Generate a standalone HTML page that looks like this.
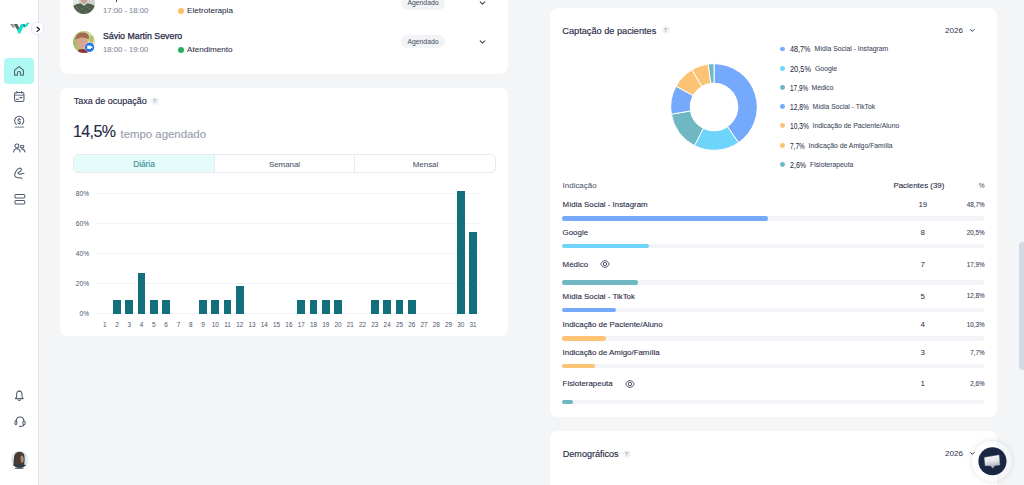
<!DOCTYPE html>
<html><head><meta charset="utf-8">
<style>
*{margin:0;padding:0;box-sizing:border-box}
html,body{width:1024px;height:485px;overflow:hidden;background:#f4f5f7;font-family:"Liberation Sans",sans-serif;color:#1f2a44}
#side{position:absolute;left:0;top:0;width:39px;height:485px;background:#fff;border-right:1px solid #e0e3ea}
.card{position:absolute;background:#fff;border-radius:8px}
.t{position:absolute;white-space:nowrap;line-height:1}
svg{position:absolute;overflow:visible}
.q{position:absolute;width:8px;height:8px;border-radius:50%;background:#f1f3f6;color:#9aa3b2;font-size:5px;line-height:8px;text-align:center;font-weight:700}
</style></head><body>

<div id="side"></div>
<svg style="left:0;top:0" width="40" height="40" viewBox="0 0 40 40">
<path d="M10 24 L13 24 L15.2 27.6 L12.6 27.6 Z" fill="#8e9394"/>
<path d="M13.8 24 L17.4 24 L19.6 28.8 L18.2 31.6 Z" fill="#5c6264"/>
<path d="M16.9 29.4 L18.4 33.5 L20.1 33.5 L24.6 24 L20.9 24 L18.5 29 Z" fill="#14e0cf"/>
<path d="M23.4 24.4 L25.3 24.4 L24.9 26.6 L23.5 26.9 Z" fill="#3d4446"/>
<path d="M23.4 27.6 L25.8 27.6 L29.3 23.2 L28.4 22.4 L26.8 22.9 Z" fill="#14e0cf"/>
</svg>
<div style="position:absolute;left:31px;top:22px;width:13px;height:13px;border-radius:5px;background:#fff;border:1px solid #e7e9f0"></div>
<svg style="left:35px;top:25px" width="6" height="7" viewBox="0 0 6 7"><path d="M2.1 2.2 L4.5 4.3 L2.1 6.4" fill="none" stroke="#1c2230" stroke-width="1.25" stroke-linecap="round" stroke-linejoin="round"/></svg>
<div style="position:absolute;left:4px;top:58px;width:30px;height:26px;border-radius:4px;background:#aef9f1"></div>
<svg style="left:14px;top:65.5px" width="11" height="11" viewBox="0 0 11 11"><path d="M0.6 4.2 L5 0.6 L9.4 4.2 L9.4 8.7 Q9.4 9.2 8.9 9.2 L6.6 9.2 L6.6 7 Q6.6 5.5 5 5.5 Q3.4 5.5 3.4 7 L3.4 9.2 L1.1 9.2 Q0.6 9.2 0.6 8.7 Z" fill="none" stroke="#505b73" stroke-width="1.05" stroke-linecap="round" stroke-linejoin="round" stroke="#3c5a62"/></svg>
<svg style="left:14px;top:91px" width="11" height="11" viewBox="0 0 11 11"><rect x="0.55" y="1.5" width="9.4" height="8.9" rx="1.5" fill="none" stroke="#505b73" stroke-width="1.05" stroke-linecap="round" stroke-linejoin="round"/><path d="M0.6 4.2 L9.9 4.2" fill="none" stroke="#505b73" stroke-width="1.6" stroke-opacity="0.55"/><path d="M2.8 0.4 L2.8 2 M7.6 0.4 L7.6 2 M2.4 8.2 L4.6 8.2 M5.8 6.6 L8 6.6" fill="none" stroke="#505b73" stroke-width="1.05" stroke-linecap="round" stroke-linejoin="round"/></svg>
<svg style="left:13px;top:115px" width="13" height="14" viewBox="0 0 13 14"><path d="M3.24 9.32 A4.6 4.6 0 1 1 9.16 9.32" fill="none" stroke="#505b73" stroke-width="1.05" stroke-linecap="round" stroke-linejoin="round"/><path d="M7.5 4.7 Q7.1 4 6.2 4 Q4.9 4 4.9 5.1 Q4.9 6 6.2 6.3 Q7.5 6.6 7.5 7.6 Q7.5 8.6 6.2 8.6 Q5.1 8.6 4.8 7.9 M6.2 3.3 L6.2 4 M6.2 8.6 L6.2 9.3" fill="none" stroke="#505b73" stroke-width="1.05" stroke-linecap="round" stroke-linejoin="round"/><path d="M2.2 12.1 L10.6 12.1" fill="none" stroke="#8f97a6" stroke-width="1.3" stroke-linecap="round"/></svg>
<svg style="left:13px;top:143px" width="13" height="10" viewBox="0 0 13 10"><rect x="2" y="0.9" width="3.8" height="3.8" rx="1.7" fill="none" stroke="#505b73" stroke-width="1.05" stroke-linecap="round" stroke-linejoin="round"/><path d="M0.6 9 Q0.9 5.8 3.9 5.8 Q6.9 5.8 7.2 9" fill="none" stroke="#505b73" stroke-width="1.05" stroke-linecap="round" stroke-linejoin="round"/><ellipse cx="9.1" cy="3.5" rx="1.8" ry="1.35" fill="none" stroke="#505b73" stroke-width="1.05" stroke-linecap="round" stroke-linejoin="round"/><path d="M8.6 6 Q11.6 6 11.9 9" fill="none" stroke="#505b73" stroke-width="1.05" stroke-linecap="round" stroke-linejoin="round"/></svg>
<svg style="left:13px;top:167px" width="12" height="13" viewBox="0 0 12 13"><path d="M6.6 1.1 Q4.2 1.8 2.5 5.2 Q0.9 8.6 2.7 10 Q4.4 10.9 8.4 10.9 L8.8 11.7 M6.6 1.1 Q8.7 1.2 8.3 3 Q7.8 4.6 5.3 5.4 L5 6.3 Q6.6 7.6 8.2 6.9 Q9.6 6.3 11 6.3" fill="none" stroke="#505b73" stroke-width="1.05" stroke-linecap="round" stroke-linejoin="round"/></svg>
<svg style="left:13.5px;top:193px" width="12" height="12" viewBox="0 0 12 12"><rect x="0.9" y="1.4" width="9.9" height="3.6" rx="1.2" fill="none" stroke="#505b73" stroke-width="1.05" stroke-linecap="round" stroke-linejoin="round"/><rect x="0.9" y="7.4" width="9.9" height="3.6" rx="1.2" fill="none" stroke="#505b73" stroke-width="1.05" stroke-linecap="round" stroke-linejoin="round"/></svg>
<svg style="left:14px;top:390px" width="11" height="12" viewBox="0 0 11 12"><path d="M1.4 8.6 Q2.6 7.8 2.6 6 L2.6 4.6 Q2.6 1.1 5.3 1.1 Q8 1.1 8 4.6 L8 6 Q8 7.8 9.2 8.6 Z M4.2 10 Q5.3 11.2 6.4 10 M5.3 0.5 L5.3 1.1" fill="none" stroke="#505b73" stroke-width="1.05" stroke-linecap="round" stroke-linejoin="round"/></svg>
<svg style="left:13.5px;top:416px" width="12" height="12" viewBox="0 0 12 12"><path d="M2.2 5.6 Q2.2 0.9 6 0.9 Q9.8 0.9 9.8 5.6" fill="none" stroke="#505b73" stroke-width="1.05" stroke-linecap="round" stroke-linejoin="round"/><ellipse cx="1.9" cy="6.7" rx="1" ry="1.9" fill="none" stroke="#505b73" stroke-width="1.05" stroke-linecap="round" stroke-linejoin="round"/><ellipse cx="10" cy="6.7" rx="1.2" ry="2" fill="none" stroke="#505b73" stroke-width="1.05" stroke-linecap="round" stroke-linejoin="round"/><path d="M9.8 8.8 Q9.4 10.3 6.6 10.4" fill="none" stroke="#505b73" stroke-width="1.05" stroke-linecap="round" stroke-linejoin="round"/><circle cx="6" cy="10.4" r="0.8" fill="#505b73"/></svg>
<svg style="left:0;top:440px" width="38" height="40" viewBox="0 440 38 40">
<defs><clipPath id="ua"><circle cx="19.6" cy="459.4" r="8.6"/></clipPath></defs>
<g clip-path="url(#ua)">
<rect x="10" y="450" width="20" height="20" fill="#d9edf2"/>
<path d="M13.6 466 Q13.4 460 14.2 456 Q15.6 451.6 20 451.8 Q24.4 452.2 24.6 457 Q25 462 23.8 466 Z" fill="#4a3a33"/>
<path d="M21 455.5 Q23.6 455.8 23.8 459 Q23.8 462.4 21.6 463 Q20.4 461 20.6 458 Z" fill="#a98e80"/>
<path d="M10 469 L11.5 465 Q16 464.2 19.6 464.8 Q24 464.2 27.6 465 L30 469 Z" fill="#2c3d47"/>
</g>
<path d="M15.2 468.4 L23 468.4" stroke="#4a4f57" stroke-width="0.9" stroke-linecap="round"/>
</svg>
<div class="card" style="left:60px;top:-20px;width:448px;height:94px"></div>
<div class="card" style="left:60px;top:88px;width:448px;height:248px"></div>
<div class="card" style="left:550px;top:8px;width:447px;height:408.5px"></div>
<div class="card" style="left:550px;top:431px;width:447px;height:80px"></div>
<svg style="left:73px;top:-7.6px" width="22" height="22" viewBox="0 0 22 22">
<defs><clipPath id="a1"><circle cx="11" cy="11" r="11"/></clipPath></defs>
<g clip-path="url(#a1)"><rect width="22" height="22" fill="#cfd3d0"/>
<rect x="0" y="0" width="6" height="22" fill="#e3e6e4"/>
<path d="M7 4 Q11 0 15 4 Q15.5 10 11 12 Q6.5 10 7 4Z" fill="#c79f8b"/>
<path d="M0 22 L0 14 Q4 11 8 11.5 L11 14 L14 11.5 Q18 11 22 14 L22 22Z" fill="#505f4e"/>
<path d="M3 15 L5 17 M8 16 L10 18 M14 15 L16 17 M18 17 L20 19 M5 19 L7 21 M12 19 L14 21" stroke="#7b8a77" stroke-width="0.8"/>
</g></svg>
<div class="t" style="top:7.17px;font-size:7.7px;color:#848d9e;-webkit-text-stroke:0.1px #848d9e;left:103.00px;">17:00 - 18:00</div>
<div style="position:absolute;left:178px;top:7.8px;width:6px;height:6px;border-radius:50%;background:#fdbf6a"></div>
<div class="t" style="top:7.40px;font-size:8.1px;color:#1f2a44;-webkit-text-stroke:0.05px #1f2a44;left:187.00px;">Eletroterapia</div>
<div style="position:absolute;left:116.2px;top:0;width:1px;height:1.6px;background:#3a4459"></div>
<svg style="left:73px;top:31px" width="22" height="22" viewBox="0 0 22 22">
<defs><clipPath id="a2"><circle cx="11" cy="11" r="11"/></clipPath>
<linearGradient id="bg2" x1="0" y1="0" x2="1" y2="0"><stop offset="0" stop-color="#a3b464"/><stop offset="0.6" stop-color="#c9cf92"/><stop offset="1" stop-color="#e6e8c8"/></linearGradient></defs>
<g clip-path="url(#a2)"><rect width="22" height="22" fill="url(#bg2)"/>
<ellipse cx="18.5" cy="8.5" rx="2.2" ry="4" fill="#b4c06c"/>
<ellipse cx="9.4" cy="11.2" rx="5.4" ry="6.4" fill="#d8a68e"/>
<path d="M2.6 8.6 Q2.8 2.6 8.6 1.6 Q14.2 1 16 5.2 L15.6 8.4 Q10.5 5 4.6 7.8 Z" fill="#a06b4e"/>
<path d="M4.5 22 L5.6 18.6 Q10 17.6 14.4 18.6 L15.4 22 Z" fill="#8d3344"/></g>
<circle cx="16.6" cy="16.3" r="5" fill="#fff" opacity="0.6"/>
<circle cx="16.6" cy="16.3" r="4.6" fill="#1f73ee"/>
<path d="M14.2 15 Q14.2 14.4 14.8 14.4 L17.4 14.4 Q18 14.4 18 15 L18 17.4 Q18 18 17.4 18 L14.8 18 Q14.2 18 14.2 17.4Z M18 15.7 L19.4 14.9 L19.4 17.5 L18 16.7Z" fill="#fff"/>
</svg>
<div class="t" style="top:31.90px;font-size:8.8px;color:#1f2a44;-webkit-text-stroke:0.25px #1f2a44;left:103.00px;">Sávio Martin Severo</div>
<div class="t" style="top:46.17px;font-size:7.7px;color:#848d9e;-webkit-text-stroke:0.1px #848d9e;left:103.00px;">18:00 - 19:00</div>
<div style="position:absolute;left:178px;top:46.8px;width:6px;height:6px;border-radius:50%;background:#22b35a"></div>
<div class="t" style="top:46.40px;font-size:8.1px;color:#1f2a44;-webkit-text-stroke:0.05px #1f2a44;left:187.00px;">Atendimento</div>
<div style="position:absolute;left:401px;top:-4.4px;width:44px;height:13.9px;border-radius:7px;background:#f1f3f6"></div>
<div class="t" style="top:0.44px;font-size:6.8px;color:#4b556a;-webkit-text-stroke:0.06px #4b556a;left:223.00px;width:400px;text-align:center;">Agendado</div>
<svg style="left:479px;top:1.0px" width="7" height="4" viewBox="0 0 7 4"><path d="M1.2 0.9 L3.5 3.1 L5.8 0.9" fill="none" stroke="#3a4256" stroke-width="1.05" stroke-linecap="round" stroke-linejoin="round"/></svg>
<div style="position:absolute;left:401px;top:34.6px;width:44px;height:13.9px;border-radius:7px;background:#f1f3f6"></div>
<div class="t" style="top:38.74px;font-size:6.8px;color:#4b556a;-webkit-text-stroke:0.06px #4b556a;left:223.00px;width:400px;text-align:center;">Agendado</div>
<svg style="left:479px;top:39.5px" width="7" height="4" viewBox="0 0 7 4"><path d="M1.2 0.9 L3.5 3.1 L5.8 0.9" fill="none" stroke="#3a4256" stroke-width="1.05" stroke-linecap="round" stroke-linejoin="round"/></svg>
<div class="t" style="top:96.72px;font-size:9.0px;color:#1f2a44;-webkit-text-stroke:0.14px #1f2a44;left:73.70px;">Taxa de ocupação</div>
<div class="q" style="left:150.5px;top:96.8px">?</div>
<div class="t" style="top:123.98px;font-size:16px;color:#1f2a44;-webkit-text-stroke:0.15px #1f2a44;letter-spacing:-0.6px;left:73.00px;">14,5%</div>
<div class="t" style="top:128.71px;font-size:11.4px;color:#98a0ae;-webkit-text-stroke:0.15px #98a0ae;left:120.50px;">tempo agendado</div>
<div style="position:absolute;left:73px;top:154px;width:423px;height:19px;border:1px solid #e6e9ef;border-radius:5px;overflow:hidden"><div style="position:absolute;left:0;top:0;width:139.6px;height:17px;background:#e4fcfa"></div><div style="position:absolute;left:139.6px;top:0;width:1px;height:17px;background:#e6e9ef"></div><div style="position:absolute;left:280.4px;top:0;width:1px;height:17px;background:#e6e9ef"></div></div>
<div class="t" style="top:160.31px;font-size:8.3px;color:#3e8f98;-webkit-text-stroke:0.15px #3e8f98;left:-56.00px;width:400px;text-align:center;">Diária</div>
<div class="t" style="top:160.58px;font-size:7.9px;color:#4b556a;-webkit-text-stroke:0.08px #4b556a;left:84.50px;width:400px;text-align:center;">Semanal</div>
<div class="t" style="top:160.58px;font-size:7.9px;color:#4b556a;-webkit-text-stroke:0.08px #4b556a;left:225.50px;width:400px;text-align:center;">Mensal</div>
<div style="position:absolute;left:96px;top:313.20px;width:385px;height:1px;background:#f2f4f7"></div>
<div class="t" style="top:310.93px;font-size:6.6px;color:#4b556a;font-weight:400;right:935.00px;">0%</div>
<div style="position:absolute;left:96px;top:283.25px;width:385px;height:1px;background:#f2f4f7"></div>
<div class="t" style="top:280.98px;font-size:6.6px;color:#4b556a;font-weight:400;right:935.00px;">20%</div>
<div style="position:absolute;left:96px;top:253.30px;width:385px;height:1px;background:#f2f4f7"></div>
<div class="t" style="top:251.03px;font-size:6.6px;color:#4b556a;font-weight:400;right:935.00px;">40%</div>
<div style="position:absolute;left:96px;top:223.35px;width:385px;height:1px;background:#f2f4f7"></div>
<div class="t" style="top:221.08px;font-size:6.6px;color:#4b556a;font-weight:400;right:935.00px;">60%</div>
<div style="position:absolute;left:96px;top:193.40px;width:385px;height:1px;background:#f2f4f7"></div>
<div class="t" style="top:191.13px;font-size:6.6px;color:#4b556a;font-weight:400;right:935.00px;">80%</div>
<div class="t" style="top:321.81px;font-size:6.4px;color:#4b556a;font-weight:400;left:-95.28px;width:400px;text-align:center;">1</div>
<div style="position:absolute;left:113.15px;top:300.09px;width:7.7px;height:13.61px;background:#126f7b"></div>
<div class="t" style="top:321.81px;font-size:6.4px;color:#4b556a;font-weight:400;left:-83.00px;width:400px;text-align:center;">2</div>
<div style="position:absolute;left:125.43px;top:300.09px;width:7.7px;height:13.61px;background:#126f7b"></div>
<div class="t" style="top:321.81px;font-size:6.4px;color:#4b556a;font-weight:400;left:-70.72px;width:400px;text-align:center;">3</div>
<div style="position:absolute;left:137.71px;top:272.86px;width:7.7px;height:40.84px;background:#126f7b"></div>
<div class="t" style="top:321.81px;font-size:6.4px;color:#4b556a;font-weight:400;left:-58.44px;width:400px;text-align:center;">4</div>
<div style="position:absolute;left:149.99px;top:300.09px;width:7.7px;height:13.61px;background:#126f7b"></div>
<div class="t" style="top:321.81px;font-size:6.4px;color:#4b556a;font-weight:400;left:-46.16px;width:400px;text-align:center;">5</div>
<div style="position:absolute;left:162.27px;top:300.09px;width:7.7px;height:13.61px;background:#126f7b"></div>
<div class="t" style="top:321.81px;font-size:6.4px;color:#4b556a;font-weight:400;left:-33.88px;width:400px;text-align:center;">6</div>
<div class="t" style="top:321.81px;font-size:6.4px;color:#4b556a;font-weight:400;left:-21.60px;width:400px;text-align:center;">7</div>
<div class="t" style="top:321.81px;font-size:6.4px;color:#4b556a;font-weight:400;left:-9.32px;width:400px;text-align:center;">8</div>
<div style="position:absolute;left:199.11px;top:300.09px;width:7.7px;height:13.61px;background:#126f7b"></div>
<div class="t" style="top:321.81px;font-size:6.4px;color:#4b556a;font-weight:400;left:2.96px;width:400px;text-align:center;">9</div>
<div style="position:absolute;left:211.39px;top:300.09px;width:7.7px;height:13.61px;background:#126f7b"></div>
<div class="t" style="top:321.81px;font-size:6.4px;color:#4b556a;font-weight:400;left:15.24px;width:400px;text-align:center;">10</div>
<div style="position:absolute;left:223.67px;top:300.09px;width:7.7px;height:13.61px;background:#126f7b"></div>
<div class="t" style="top:321.81px;font-size:6.4px;color:#4b556a;font-weight:400;left:27.52px;width:400px;text-align:center;">11</div>
<div style="position:absolute;left:235.95px;top:286.47px;width:7.7px;height:27.23px;background:#126f7b"></div>
<div class="t" style="top:321.81px;font-size:6.4px;color:#4b556a;font-weight:400;left:39.80px;width:400px;text-align:center;">12</div>
<div class="t" style="top:321.81px;font-size:6.4px;color:#4b556a;font-weight:400;left:52.08px;width:400px;text-align:center;">13</div>
<div class="t" style="top:321.81px;font-size:6.4px;color:#4b556a;font-weight:400;left:64.36px;width:400px;text-align:center;">14</div>
<div class="t" style="top:321.81px;font-size:6.4px;color:#4b556a;font-weight:400;left:76.64px;width:400px;text-align:center;">15</div>
<div class="t" style="top:321.81px;font-size:6.4px;color:#4b556a;font-weight:400;left:88.92px;width:400px;text-align:center;">16</div>
<div style="position:absolute;left:297.35px;top:300.09px;width:7.7px;height:13.61px;background:#126f7b"></div>
<div class="t" style="top:321.81px;font-size:6.4px;color:#4b556a;font-weight:400;left:101.20px;width:400px;text-align:center;">17</div>
<div style="position:absolute;left:309.63px;top:300.09px;width:7.7px;height:13.61px;background:#126f7b"></div>
<div class="t" style="top:321.81px;font-size:6.4px;color:#4b556a;font-weight:400;left:113.48px;width:400px;text-align:center;">18</div>
<div style="position:absolute;left:321.91px;top:300.09px;width:7.7px;height:13.61px;background:#126f7b"></div>
<div class="t" style="top:321.81px;font-size:6.4px;color:#4b556a;font-weight:400;left:125.76px;width:400px;text-align:center;">19</div>
<div style="position:absolute;left:334.19px;top:300.09px;width:7.7px;height:13.61px;background:#126f7b"></div>
<div class="t" style="top:321.81px;font-size:6.4px;color:#4b556a;font-weight:400;left:138.04px;width:400px;text-align:center;">20</div>
<div class="t" style="top:321.81px;font-size:6.4px;color:#4b556a;font-weight:400;left:150.32px;width:400px;text-align:center;">21</div>
<div class="t" style="top:321.81px;font-size:6.4px;color:#4b556a;font-weight:400;left:162.60px;width:400px;text-align:center;">22</div>
<div style="position:absolute;left:371.03px;top:300.09px;width:7.7px;height:13.61px;background:#126f7b"></div>
<div class="t" style="top:321.81px;font-size:6.4px;color:#4b556a;font-weight:400;left:174.88px;width:400px;text-align:center;">23</div>
<div style="position:absolute;left:383.31px;top:300.09px;width:7.7px;height:13.61px;background:#126f7b"></div>
<div class="t" style="top:321.81px;font-size:6.4px;color:#4b556a;font-weight:400;left:187.16px;width:400px;text-align:center;">24</div>
<div style="position:absolute;left:395.59px;top:300.09px;width:7.7px;height:13.61px;background:#126f7b"></div>
<div class="t" style="top:321.81px;font-size:6.4px;color:#4b556a;font-weight:400;left:199.44px;width:400px;text-align:center;">25</div>
<div style="position:absolute;left:407.87px;top:300.09px;width:7.7px;height:13.61px;background:#126f7b"></div>
<div class="t" style="top:321.81px;font-size:6.4px;color:#4b556a;font-weight:400;left:211.72px;width:400px;text-align:center;">26</div>
<div class="t" style="top:321.81px;font-size:6.4px;color:#4b556a;font-weight:400;left:224.00px;width:400px;text-align:center;">27</div>
<div class="t" style="top:321.81px;font-size:6.4px;color:#4b556a;font-weight:400;left:236.28px;width:400px;text-align:center;">28</div>
<div class="t" style="top:321.81px;font-size:6.4px;color:#4b556a;font-weight:400;left:248.56px;width:400px;text-align:center;">29</div>
<div style="position:absolute;left:456.99px;top:191.18px;width:7.7px;height:122.52px;background:#126f7b"></div>
<div class="t" style="top:321.81px;font-size:6.4px;color:#4b556a;font-weight:400;left:260.84px;width:400px;text-align:center;">30</div>
<div style="position:absolute;left:469.27px;top:232.02px;width:7.7px;height:81.68px;background:#126f7b"></div>
<div class="t" style="top:321.81px;font-size:6.4px;color:#4b556a;font-weight:400;left:273.12px;width:400px;text-align:center;">31</div>
<div class="t" style="top:27.04px;font-size:9.2px;color:#1f2a44;-webkit-text-stroke:0.14px #1f2a44;left:562.30px;">Captação de pacientes</div>
<div class="q" style="left:661.5px;top:26.3px">?</div>
<div class="t" style="top:26.70px;font-size:8.1px;color:#2b3346;font-weight:400;right:61.00px;">2026</div>
<svg style="left:970.3px;top:28.9px" width="6" height="4" viewBox="0 0 6 4"><path d="M0.5 0.6 L2.3 2.4 L4.1 0.6" fill="none" stroke="#2b3346" stroke-width="1" stroke-linecap="round" stroke-linejoin="round"/></svg>
<svg style="left:663.5px;top:56.5px" width="100" height="100" viewBox="-50 -50 100 100"><path d="M0.000 -43.300 A43.3 43.3 0 0 1 24.506 35.698 L13.526 19.704 A23.9 23.9 0 0 0 0.000 -23.900 Z" fill="#74a9fb" stroke="#fff" stroke-width="1"/><path d="M24.506 35.698 A43.3 43.3 0 0 1 -19.529 38.646 L-10.779 21.331 A23.9 23.9 0 0 0 13.526 19.704 Z" fill="#6fd4fa" stroke="#fff" stroke-width="1"/><path d="M-19.529 38.646 A43.3 43.3 0 0 1 -42.697 7.202 L-23.567 3.975 A23.9 23.9 0 0 0 -10.779 21.331 Z" fill="#6fb8c3" stroke="#fff" stroke-width="1"/><path d="M-42.697 7.202 A43.3 43.3 0 0 1 -37.972 -20.809 L-20.959 -11.486 A23.9 23.9 0 0 0 -23.567 3.975 Z" fill="#74a9fb" stroke="#fff" stroke-width="1"/><path d="M-37.972 -20.809 A43.3 43.3 0 0 1 -22.066 -37.255 L-12.180 -20.564 A23.9 23.9 0 0 0 -20.959 -11.486 Z" fill="#fcc374" stroke="#fff" stroke-width="1"/><path d="M-22.066 -37.255 A43.3 43.3 0 0 1 -5.771 -42.914 L-3.186 -23.687 A23.9 23.9 0 0 0 -12.180 -20.564 Z" fill="#fcc374" stroke="#fff" stroke-width="1"/><path d="M-5.771 -42.914 A43.3 43.3 0 0 1 -0.000 -43.300 L-0.000 -23.900 A23.9 23.9 0 0 0 -3.186 -23.687 Z" fill="#6fb8c3" stroke="#fff" stroke-width="1"/></svg>
<div style="position:absolute;left:780.3px;top:46.50px;width:4.9px;height:4.9px;border-radius:50%;background:#74a9fb"></div>
<div class="t" style="top:45.37px;font-size:8.4px;color:#1f2a44;-webkit-text-stroke:0.05px #1f2a44;transform:scaleX(0.861);transform-origin:left center;left:789.50px;">48,7%</div>
<div class="t" style="top:46.42px;font-size:6.85px;color:#3a4459;-webkit-text-stroke:0.06px #3a4459;left:814.50px;">Mídia Social - Instagram</div>
<div style="position:absolute;left:780.3px;top:65.73px;width:4.9px;height:4.9px;border-radius:50%;background:#6fd4fa"></div>
<div class="t" style="top:64.60px;font-size:8.4px;color:#1f2a44;-webkit-text-stroke:0.05px #1f2a44;transform:scaleX(0.882);transform-origin:left center;left:789.50px;">20,5%</div>
<div class="t" style="top:65.65px;font-size:6.85px;color:#3a4459;-webkit-text-stroke:0.06px #3a4459;left:815.00px;">Google</div>
<div style="position:absolute;left:780.3px;top:84.96px;width:4.9px;height:4.9px;border-radius:50%;background:#6fb8c3"></div>
<div class="t" style="top:83.83px;font-size:8.4px;color:#1f2a44;-webkit-text-stroke:0.05px #1f2a44;transform:scaleX(0.765);transform-origin:left center;left:789.50px;">17,9%</div>
<div class="t" style="top:84.88px;font-size:6.85px;color:#3a4459;-webkit-text-stroke:0.06px #3a4459;left:811.50px;">Médico</div>
<div style="position:absolute;left:780.3px;top:104.19px;width:4.9px;height:4.9px;border-radius:50%;background:#74a9fb"></div>
<div class="t" style="top:103.06px;font-size:8.4px;color:#1f2a44;-webkit-text-stroke:0.05px #1f2a44;transform:scaleX(0.79);transform-origin:left center;left:789.50px;">12,8%</div>
<div class="t" style="top:104.11px;font-size:6.85px;color:#3a4459;-webkit-text-stroke:0.06px #3a4459;left:812.50px;">Mídia Social - TikTok</div>
<div style="position:absolute;left:780.3px;top:123.42px;width:4.9px;height:4.9px;border-radius:50%;background:#fcc374"></div>
<div class="t" style="top:122.29px;font-size:8.4px;color:#1f2a44;-webkit-text-stroke:0.05px #1f2a44;transform:scaleX(0.798);transform-origin:left center;left:789.50px;">10,3%</div>
<div class="t" style="top:123.34px;font-size:6.85px;color:#3a4459;-webkit-text-stroke:0.06px #3a4459;left:812.50px;">Indicação de Paciente/Aluno</div>
<div style="position:absolute;left:780.3px;top:142.65px;width:4.9px;height:4.9px;border-radius:50%;background:#fcc374"></div>
<div class="t" style="top:141.52px;font-size:8.4px;color:#1f2a44;-webkit-text-stroke:0.05px #1f2a44;transform:scaleX(0.77);transform-origin:left center;left:789.50px;">7,7%</div>
<div class="t" style="top:142.57px;font-size:6.85px;color:#3a4459;-webkit-text-stroke:0.06px #3a4459;left:808.50px;">Indicação de Amigo/Família</div>
<div style="position:absolute;left:780.3px;top:161.88px;width:4.9px;height:4.9px;border-radius:50%;background:#6fb8c3"></div>
<div class="t" style="top:160.75px;font-size:8.4px;color:#1f2a44;-webkit-text-stroke:0.05px #1f2a44;transform:scaleX(0.848);transform-origin:left center;left:789.50px;">2,6%</div>
<div class="t" style="top:161.80px;font-size:6.85px;color:#3a4459;-webkit-text-stroke:0.06px #3a4459;left:810.00px;">Fisioterapeuta</div>
<div class="t" style="top:181.96px;font-size:7.95px;color:#434d63;font-weight:400;left:562.60px;">Indicação</div>
<div class="t" style="top:181.98px;font-size:7.9px;color:#1f2a44;-webkit-text-stroke:0.1px #1f2a44;right:79.70px;">Pacientes (39)</div>
<div class="t" style="top:182.57px;font-size:6.5px;color:#3a4459;font-weight:400;right:39.50px;">%</div>
<div class="t" style="top:200.98px;font-size:7.9px;color:#1f2a44;-webkit-text-stroke:0.1px #1f2a44;left:562.60px;">Mídia Social - Instagram</div>
<div class="t" style="top:200.98px;font-size:7.9px;color:#1f2a44;font-weight:400;left:722.80px;width:400px;text-align:center;">19</div>
<div class="t" style="top:201.65px;font-size:6.3px;color:#3a4459;-webkit-text-stroke:0.08px #3a4459;right:39.50px;">48,7%</div>
<div style="position:absolute;left:562.3px;top:216.00px;width:422.2px;height:4.6px;border-radius:2.3px;background:#f2f4f7"></div>
<div style="position:absolute;left:562.3px;top:216.00px;width:205.51px;height:4.6px;border-radius:2.3px;background:#74a9fb"></div>
<div class="t" style="top:229.08px;font-size:7.9px;color:#1f2a44;-webkit-text-stroke:0.1px #1f2a44;left:562.60px;">Google</div>
<div class="t" style="top:229.08px;font-size:7.9px;color:#1f2a44;font-weight:400;left:722.80px;width:400px;text-align:center;">8</div>
<div class="t" style="top:229.75px;font-size:6.3px;color:#3a4459;-webkit-text-stroke:0.08px #3a4459;right:39.50px;">20,5%</div>
<div style="position:absolute;left:562.3px;top:243.90px;width:422.2px;height:4.6px;border-radius:2.3px;background:#f2f4f7"></div>
<div style="position:absolute;left:562.3px;top:243.90px;width:86.51px;height:4.6px;border-radius:2.3px;background:#6fd4fa"></div>
<div class="t" style="top:260.98px;font-size:7.9px;color:#1f2a44;-webkit-text-stroke:0.1px #1f2a44;left:562.60px;">Médico</div>
<div class="t" style="top:260.98px;font-size:7.9px;color:#1f2a44;font-weight:400;left:722.80px;width:400px;text-align:center;">7</div>
<div class="t" style="top:261.65px;font-size:6.3px;color:#3a4459;-webkit-text-stroke:0.08px #3a4459;right:39.50px;">17,9%</div>
<div style="position:absolute;left:562.3px;top:280.10px;width:422.2px;height:4.6px;border-radius:2.3px;background:#f2f4f7"></div>
<div style="position:absolute;left:562.3px;top:280.10px;width:75.54px;height:4.6px;border-radius:2.3px;background:#6fb8c3"></div>
<svg style="left:599.9px;top:260.3px" width="10" height="8" viewBox="0 0 10 8"><path d="M0.7 4 Q2.4 0.5 5 0.5 Q7.6 0.5 9.3 4 Q7.6 7.5 5 7.5 Q2.4 7.5 0.7 4Z" fill="none" stroke="#3a4459" stroke-width="0.85"/><circle cx="5" cy="4" r="1.7" fill="none" stroke="#3a4459" stroke-width="0.85"/></svg>
<div class="t" style="top:292.68px;font-size:7.9px;color:#1f2a44;-webkit-text-stroke:0.1px #1f2a44;left:562.60px;">Mídia Social - TikTok</div>
<div class="t" style="top:292.68px;font-size:7.9px;color:#1f2a44;font-weight:400;left:722.80px;width:400px;text-align:center;">5</div>
<div class="t" style="top:293.35px;font-size:6.3px;color:#3a4459;-webkit-text-stroke:0.08px #3a4459;right:39.50px;">12,8%</div>
<div style="position:absolute;left:562.3px;top:307.90px;width:422.2px;height:4.6px;border-radius:2.3px;background:#f2f4f7"></div>
<div style="position:absolute;left:562.3px;top:307.90px;width:54.02px;height:4.6px;border-radius:2.3px;background:#74a9fb"></div>
<div class="t" style="top:320.98px;font-size:7.9px;color:#1f2a44;-webkit-text-stroke:0.1px #1f2a44;left:562.60px;">Indicação de Paciente/Aluno</div>
<div class="t" style="top:320.98px;font-size:7.9px;color:#1f2a44;font-weight:400;left:722.80px;width:400px;text-align:center;">4</div>
<div class="t" style="top:321.65px;font-size:6.3px;color:#3a4459;-webkit-text-stroke:0.08px #3a4459;right:39.50px;">10,3%</div>
<div style="position:absolute;left:562.3px;top:336.00px;width:422.2px;height:4.6px;border-radius:2.3px;background:#f2f4f7"></div>
<div style="position:absolute;left:562.3px;top:336.00px;width:43.47px;height:4.6px;border-radius:2.3px;background:#fcc374"></div>
<div class="t" style="top:348.88px;font-size:7.9px;color:#1f2a44;-webkit-text-stroke:0.1px #1f2a44;left:562.60px;">Indicação de Amigo/Família</div>
<div class="t" style="top:348.88px;font-size:7.9px;color:#1f2a44;font-weight:400;left:722.80px;width:400px;text-align:center;">3</div>
<div class="t" style="top:349.55px;font-size:6.3px;color:#3a4459;-webkit-text-stroke:0.08px #3a4459;right:39.50px;">7,7%</div>
<div style="position:absolute;left:562.3px;top:363.60px;width:422.2px;height:4.6px;border-radius:2.3px;background:#f2f4f7"></div>
<div style="position:absolute;left:562.3px;top:363.60px;width:32.49px;height:4.6px;border-radius:2.3px;background:#fcc374"></div>
<div class="t" style="top:380.48px;font-size:7.9px;color:#1f2a44;-webkit-text-stroke:0.1px #1f2a44;left:562.60px;">Fisioterapeuta</div>
<div class="t" style="top:380.48px;font-size:7.9px;color:#1f2a44;font-weight:400;left:722.80px;width:400px;text-align:center;">1</div>
<div class="t" style="top:381.15px;font-size:6.3px;color:#3a4459;-webkit-text-stroke:0.08px #3a4459;right:39.50px;">2,6%</div>
<div style="position:absolute;left:562.3px;top:399.80px;width:422.2px;height:4.6px;border-radius:2.3px;background:#f2f4f7"></div>
<div style="position:absolute;left:562.3px;top:399.80px;width:10.97px;height:4.6px;border-radius:2.3px;background:#6fb8c3"></div>
<svg style="left:624.6px;top:379.8px" width="10" height="8" viewBox="0 0 10 8"><path d="M0.7 4 Q2.4 0.5 5 0.5 Q7.6 0.5 9.3 4 Q7.6 7.5 5 7.5 Q2.4 7.5 0.7 4Z" fill="none" stroke="#3a4459" stroke-width="0.85"/><circle cx="5" cy="4" r="1.7" fill="none" stroke="#3a4459" stroke-width="0.85"/></svg>
<div class="t" style="top:449.50px;font-size:9.05px;color:#1f2a44;-webkit-text-stroke:0.14px #1f2a44;left:562.80px;">Demográficos</div>
<div class="q" style="left:622.5px;top:449.5px">?</div>
<div class="t" style="top:450.10px;font-size:8.1px;color:#2b3346;font-weight:400;right:61.00px;">2026</div>
<svg style="left:970.3px;top:452.3px" width="6" height="4" viewBox="0 0 6 4"><path d="M0.5 0.6 L2.3 2.4 L4.1 0.6" fill="none" stroke="#2b3346" stroke-width="1" stroke-linecap="round" stroke-linejoin="round"/></svg>
<div style="position:absolute;left:1019px;top:242px;width:8px;height:128px;border-radius:4px;background:#d3d9e4"></div>
<div style="position:absolute;left:972px;top:441px;width:40px;height:40px;border-radius:50%;box-shadow:0 0 6px rgba(20,30,60,0.12)"></div>
<svg style="left:977.7px;top:446.7px" width="29" height="29" viewBox="0 0 29 29">
<defs><linearGradient id="cb" x1="0" y1="0" x2="0.2" y2="1"><stop offset="0" stop-color="#ffffff"/><stop offset="0.55" stop-color="#e2e4e8"/><stop offset="1" stop-color="#a9adb6"/></linearGradient></defs>
<circle cx="14.45" cy="14.25" r="14.05" fill="#1a2744"/>
<path d="M6.4 10.4 L21.1 7.9 L21.8 18.1 L16.9 18.5 L14.8 21.2 L12.6 18.7 L7.1 18.8 Z" fill="url(#cb)" stroke="#c6c9cf" stroke-width="0.3"/>
</svg>
</body></html>
